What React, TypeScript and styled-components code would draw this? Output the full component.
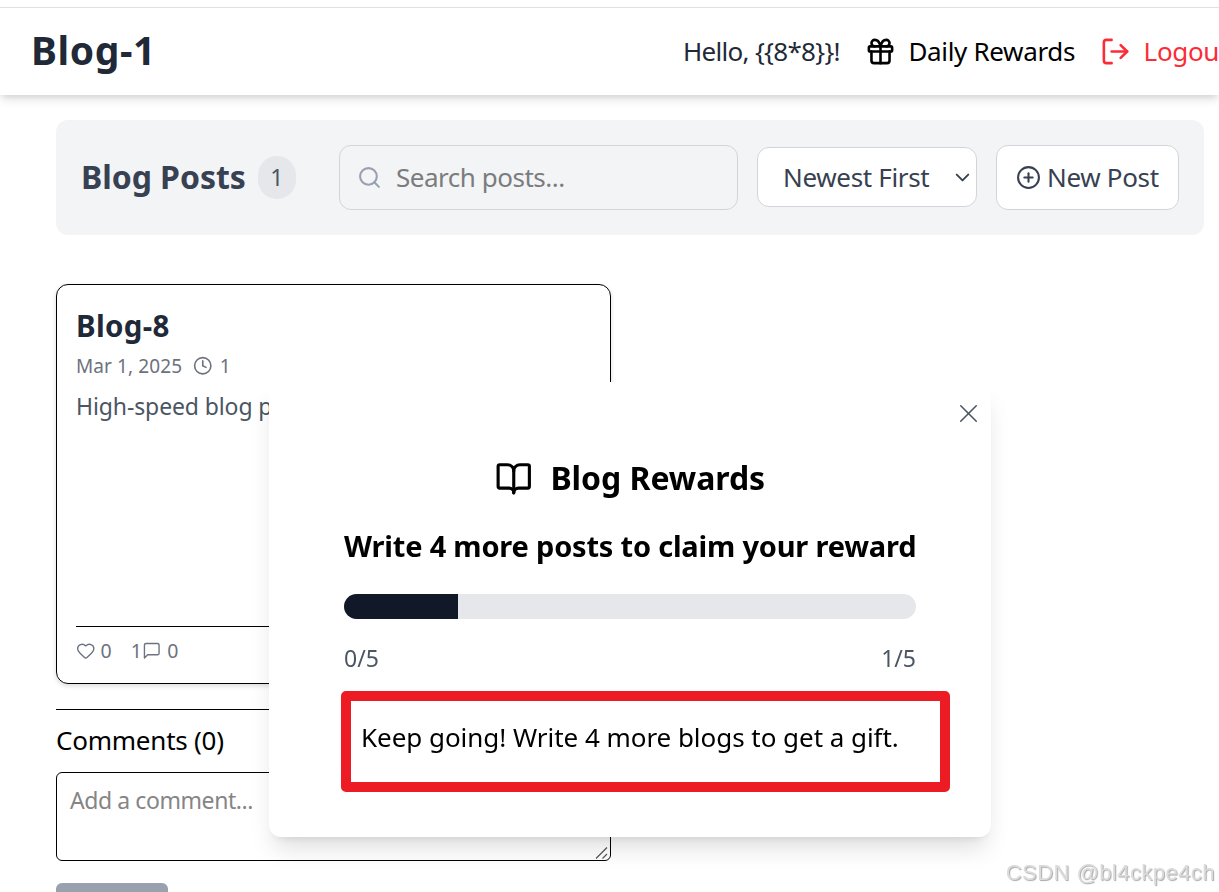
import React, {useState} from 'react';
import styled, {createGlobalStyle} from 'styled-components';
import {BookOpen, ChevronDown, CirclePlus, Clock, Gift, Heart, LogOut, Search, X} from 'lucide-react';

const Color = {
    TEXT: '#1f2937',
    TEXT_SOFT: '#374151',
    TEXT_MUTED: '#4b5563',
    META: '#6b7280',
    BORDER: '#d1d5db',
    PANEL: '#f3f4f6',
    TRACK: '#e5e7eb',
    FILL: '#111827',
    DANGER: '#fb2c36',
    MARK: '#ed1c24',
};

const GlobalStyle = createGlobalStyle`
* {
box-sizing: border-box;
}

body {
margin: 0;
overflow: hidden;
background: #fff;
color: #000;
font-family: 'Segoe UI', 'Noto Sans', sans-serif;
}

h1, h2, h3, p {
margin: 0;
}

button, textarea, input {
font-family: inherit;
}

svg {
flex-shrink: 0;
}
`;

const Page = styled.div`
height: 892px;
overflow: hidden;
padding-top: 7px;
`;

const Header = styled.header`
display: flex;
align-items: center;
height: 88px;
padding-left: 31px;
border-top: 1px solid #e1e1e1;
background: #fff;
box-shadow: 0 6px 9px -1px rgba(0, 0, 0, 0.1), 0 3px 6px -2px rgba(0, 0, 0, 0.1);
`;

const Brand = styled.h1`
flex: 0 0 652px;
padding-bottom: 3px;
font-size: 39px;
line-height: 52px;
letter-spacing: 0.6px;
color: ${Color.TEXT};
`;

const Nav = styled.nav`
display: flex;
align-items: center;
gap: 25px;
font-size: 26px;
line-height: 36px;
white-space: nowrap;

span {
padding-bottom: 2px;
}
`;

const Greeting = styled.span`
letter-spacing: -0.7px;
color: ${Color.TEXT};
`;

const NavButton = styled.button<{ $danger?: boolean }>`
display: flex;
align-items: center;
gap: 12.5px;
padding: 0;
border: none;
background: transparent;
font-size: 26px;
line-height: 36px;
letter-spacing: -0.33px;
color: ${props => props.$danger ? Color.DANGER : '#000'};
`;

const Toolbar = styled.section`
display: flex;
align-items: center;
gap: 19px;
width: 1148px;
height: 115px;
margin: 25px 0 49px 56px;
padding: 0 25px;
border-radius: 12px;
background: ${Color.PANEL};
`;

const ToolbarTitle = styled.div`
display: flex;
align-items: center;
gap: 12px;
margin-right: auto;

h2 {
padding-bottom: 1px;
font-size: 32px;
line-height: 44px;
letter-spacing: -0.05px;
color: ${Color.TEXT_SOFT};
}
`;

const Badge = styled.span`
display: flex;
align-items: center;
justify-content: center;
width: 38px;
height: 43px;
padding-bottom: 2px;
border-radius: 19px;
background: ${Color.TRACK};
font-size: 23px;
color: ${Color.TEXT_MUTED};
`;

const SearchBox = styled.label`
display: flex;
align-items: center;
gap: 14px;
width: 399px;
height: 65px;
padding-left: 17px;
border: 1px solid ${Color.BORDER};
border-radius: 12px;
color: #99a1af;

input {
flex: 1;
min-width: 0;
padding: 0 0 2px;
border: none;
outline: none;
background: transparent;
font-size: 26px;
line-height: 36px;
letter-spacing: -0.48px;
}

input::placeholder {
color: #7b7c7e;
}
`;

const Control = styled.button`
display: flex;
align-items: center;
border: 1px solid ${Color.BORDER};
border-radius: 12px;
background: #fff;
font-size: 26px;
line-height: 36px;
letter-spacing: -0.33px;
white-space: nowrap;
color: ${Color.TEXT_SOFT};
`;

const SortSelect = styled(Control)`
justify-content: space-between;
width: 220px;
height: 60px;
margin-bottom: 1px;
padding: 0 2px 0 25px;

span {
padding-bottom: 1px;
}
`;

const NewPostButton = styled(Control)`
gap: 6px;
width: 183px;
height: 65px;
padding: 0 0 0 19px;

span {
padding-bottom: 2px;
}
`;

const Column = styled.main`
width: 555px;
margin-left: 56px;
`;

const Card = styled.article`
display: flex;
flex-direction: column;
height: 400px;
padding: 19px;
border: 1px solid #000;
border-radius: 12px;
box-shadow: 0 2px 5px rgba(0, 0, 0, 0.14);
`;

const CardTitle = styled.h3`
padding-top: 1px;
font-size: 29.5px;
line-height: 42px;
letter-spacing: 0.3px;
color: ${Color.TEXT};
`;

const Meta = styled.div`
display: flex;
align-items: center;
margin-top: 5px;
font-size: 19px;
line-height: 28px;
letter-spacing: 0.1px;
color: ${Color.META};

svg {
margin: 0 7px 0 11px;
}
`;

const Excerpt = styled.p`
margin-top: 8px;
font-size: 23px;
line-height: 36px;
letter-spacing: -0.11px;
color: ${Color.TEXT_MUTED};
`;

const CardFooter = styled.footer`
display: flex;
align-items: center;
gap: 19px;
height: 38px;
margin-top: auto;
padding-top: 11px;
border-top: 1px solid #000;
font-size: 19.5px;
line-height: 28px;
color: ${Color.META};
`;

const Stat = styled.span<{ $gap: number }>`
display: flex;
align-items: center;
gap: ${props => props.$gap}px;
`;

const Comments = styled.section`
margin-top: 25px;
padding-top: 10px;
border-top: 1px solid #000;

h3 {
font-size: 26px;
font-weight: 400;
line-height: 40px;
letter-spacing: -0.23px;
}
`;

const CommentField = styled.div`
position: relative;
margin-top: 12px;
`;

const CommentInput = styled.textarea`
display: block;
width: 555px;
height: 89px;
padding: 9px 13px;
border: 1px solid #000;
border-radius: 6px;
outline: none;
resize: none;
background: #fff;
font-size: 23px;
line-height: 36px;
letter-spacing: -0.42px;

&::placeholder {
color: #858585;
}
`;

const Grip = styled.svg`
position: absolute;
right: 2px;
bottom: 1px;
`;

const SubmitButton = styled.button`
width: 112px;
height: 50px;
margin-top: 22px;
border: none;
border-radius: 6px;
background: #99a1af;
`;

const Modal = styled.div`
position: fixed;
top: 382px;
left: 269px;
width: 722px;
height: 455px;
padding: 72px 75px 0;
border-radius: 12px;
background: #fff;
box-shadow: 0 16px 24px -5px rgba(0, 0, 0, 0.13), 0 6px 10px -6px rgba(0, 0, 0, 0.12);
`;

const CloseButton = styled.button`
position: absolute;
top: 16px;
right: 7px;
display: flex;
padding: 0;
border: none;
background: transparent;
color: ${Color.TEXT_MUTED};
`;

const ModalTitle = styled.h2`
display: flex;
align-items: center;
justify-content: center;
gap: 18px;
font-size: 32px;
line-height: 48px;
letter-spacing: -0.05px;

svg {
margin-top: 1px;
}
`;

const ModalSubtitle = styled.h3`
margin-top: 22px;
font-size: 29px;
line-height: 44px;
letter-spacing: -0.2px;
white-space: nowrap;
`;

const Track = styled.div`
height: 25px;
margin-top: 26px;
overflow: hidden;
border-radius: 12.5px;
background: ${Color.TRACK};
`;

const Fill = styled.div`
height: 100%;
background: ${Color.FILL};
`;

const Range = styled.div`
display: flex;
justify-content: space-between;
margin-top: 21px;
font-size: 23px;
line-height: 36px;
color: ${Color.TEXT_MUTED};
`;

const Hint = styled.p`
width: 609px;
height: 101px;
margin: 15px 0 0 -3px;
padding: 18px 0 0 10px;
border: 10px solid ${Color.MARK};
border-radius: 5px;
font-size: 26px;
line-height: 36px;
letter-spacing: -0.04px;
white-space: nowrap;
`;

const Watermark = styled.div`
position: fixed;
right: 4px;
bottom: 6px;
font-family: 'Liberation Sans', Arial, sans-serif;
font-size: 22px;
line-height: 26px;
letter-spacing: 0.45px;
color: #dcdcdc;
text-shadow: 1px 1px 1px #a8a8a8;
`;

const MessageIcon = () => (
    <svg width={19.5} height={19.5} viewBox="0 0 24 24" fill="none" stroke="currentColor" strokeWidth={1.7}
         strokeLinecap="round" strokeLinejoin="round">
        <path d="M21 15a2 2 0 0 1-2 2H7l-4 4V5a2 2 0 0 1 2-2h14a2 2 0 0 1 2 2z"/>
    </svg>
);

const posts = [
    {title: 'Blog-8', date: 'Mar 1, 2025', minutes: 1, excerpt: 'High-speed blog platform', likes: 0, views: 1, comments: 0},
];
const written = 1;
const goal = 5;

const App = () => {
    const [isOpen, setOpen] = useState(true);
    const left = goal - written;

    return (
        <>
            <GlobalStyle/>
            <Page>
                <Header>
                    <Brand>Blog-1</Brand>
                    <Nav>
                        <Greeting>{'Hello, {{8*8}}!'}</Greeting>
                        <NavButton onClick={() => setOpen(true)}>
                            <Gift size={31}/>
                            <span>Daily Rewards</span>
                        </NavButton>
                        <NavButton $danger>
                            <LogOut size={31}/>
                            <span>Logou</span>
                        </NavButton>
                    </Nav>
                </Header>
                <Toolbar>
                    <ToolbarTitle>
                        <h2>Blog Posts</h2>
                        <Badge>{posts.length}</Badge>
                    </ToolbarTitle>
                    <SearchBox>
                        <Search size={25}/>
                        <input placeholder="Search posts..."/>
                    </SearchBox>
                    <SortSelect>
                        <span>Newest First</span>
                        <ChevronDown size={23}/>
                    </SortSelect>
                    <NewPostButton>
                        <CirclePlus size={25}/>
                        <span>New Post</span>
                    </NewPostButton>
                </Toolbar>
                <Column>
                    {posts.map(post => (
                        <Card key={post.title}>
                            <CardTitle>{post.title}</CardTitle>
                            <Meta>
                                {post.date}
                                <Clock size={19.5}/>
                                {post.minutes}
                            </Meta>
                            <Excerpt>{post.excerpt}</Excerpt>
                            <CardFooter>
                                <Stat $gap={5}>
                                    <Heart size={19.5} strokeWidth={1.7}/>
                                    {post.likes}
                                </Stat>
                                <Stat $gap={6}>
                                    <Stat $gap={0}>{post.views}<MessageIcon/></Stat>
                                    {post.comments}
                                </Stat>
                            </CardFooter>
                        </Card>
                    ))}
                    <Comments>
                        <h3>Comments (0)</h3>
                        <CommentField>
                            <CommentInput placeholder="Add a comment..."/>
                            <Grip width={14} height={14} viewBox="0 0 14 14" stroke="#555" strokeWidth={1.2}>
                                <path d="M1 12.5 12 1.5M7.5 12.5 12 8"/>
                            </Grip>
                        </CommentField>
                        <SubmitButton/>
                    </Comments>
                </Column>
            </Page>
            {isOpen && (
                <Modal>
                    <CloseButton onClick={() => setOpen(false)}>
                        <X size={31} strokeWidth={1.2}/>
                    </CloseButton>
                    <ModalTitle>
                        <BookOpen size={37.5}/>
                        Blog Rewards
                    </ModalTitle>
                    <ModalSubtitle>Write {left} more posts to claim your reward</ModalSubtitle>
                    <Track>
                        <Fill style={{width: `${written / goal * 100}%`}}/>
                    </Track>
                    <Range>
                        <span>0/{goal}</span>
                        <span>{written}/{goal}</span>
                    </Range>
                    <Hint>Keep going! Write {left} more blogs to get a gift.</Hint>
                </Modal>
            )}
            <Watermark>CSDN @bl4ckpe4ch</Watermark>
        </>
    );
};

export default App;
